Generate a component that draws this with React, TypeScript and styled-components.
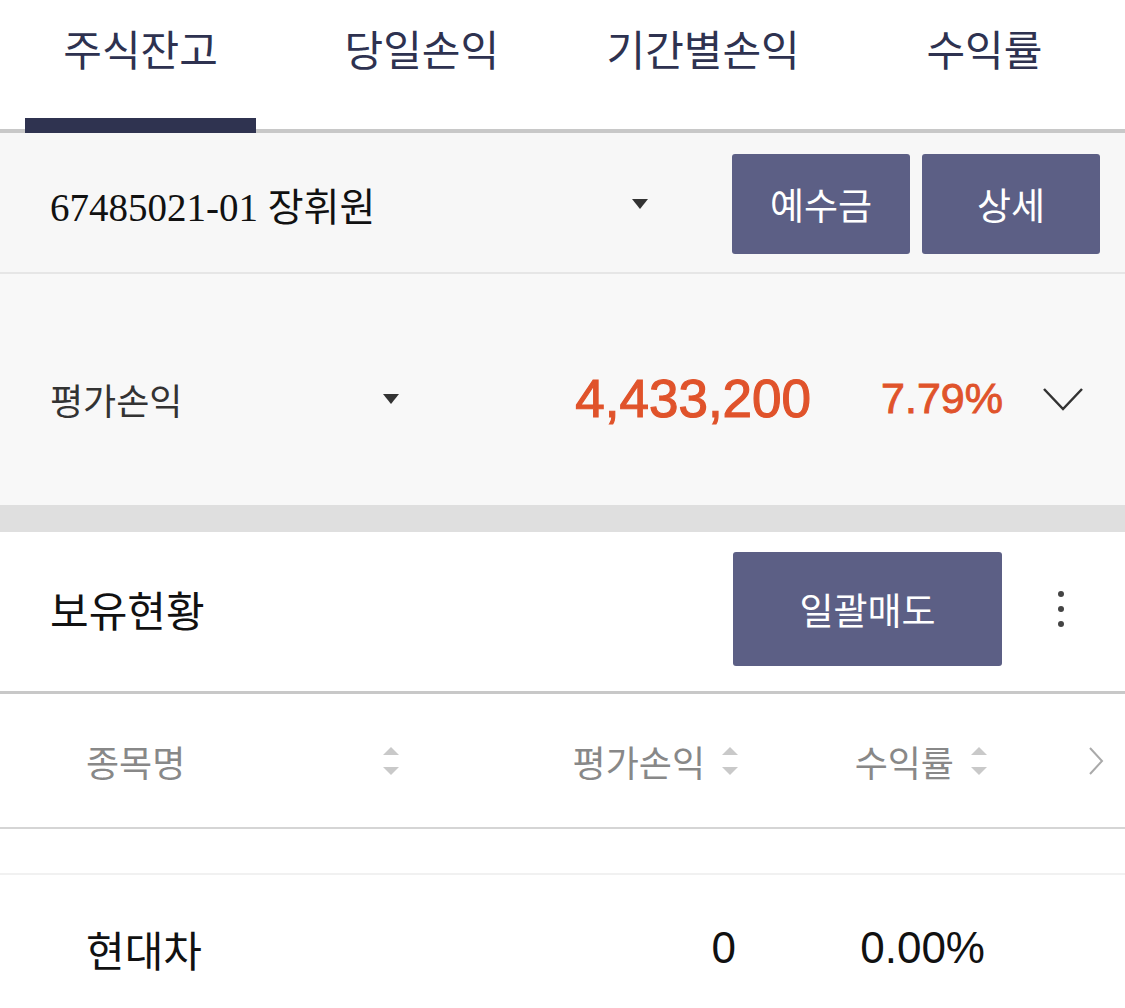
import React from 'react';
import styled, { createGlobalStyle, css } from 'styled-components';

const GlobalStyle = createGlobalStyle`
  html, body { margin: 0; padding: 0; background: #ffffff; }
  body {
    font-family: "Liberation Sans", "Noto Sans CJK KR", sans-serif;
    -webkit-font-smoothing: antialiased;
  }
  * { box-sizing: border-box; }
`;

const Page = styled.div`
  width: 1125px;
  overflow: hidden;
  background: #ffffff;
`;

/* ---------- Tabs ---------- */
const TabBar = styled.nav`
  display: flex;
  height: 133px;
  background: #ffffff;
  box-shadow: inset 0 -4px 0 #c8c8c8;
`;

const Tab = styled.div`
  flex: 1;
  display: flex;
  flex-direction: column;
  padding: 0 25px;
`;

const TabLabel = styled.div`
  height: 94px;
  display: flex;
  align-items: center;
  justify-content: center;
  font-family: "Noto Sans CJK KR", sans-serif;
  font-size: 42px;
  color: #2e3250;
  white-space: nowrap;
`;

const TabIndicator = styled.div<{ $active?: boolean }>`
  margin-top: auto;
  height: 15px;
  background: ${(p) => (p.$active ? '#2f3350' : 'transparent')};
`;

/* ---------- Account bar ---------- */
const AccountBar = styled.div`
  display: flex;
  align-items: center;
  height: 141px;
  padding: 3px 25px 0 50px;
  background: #f7f7f7;
  border-bottom: 2px solid #e6e6e6;
`;

const AccountSelect = styled.div`
  flex: 1;
  display: flex;
  align-items: center;
  justify-content: space-between;
  margin-right: 83px;
`;

const AccountText = styled.span`
  font-family: "Liberation Serif", "Noto Sans CJK KR", serif;
  font-size: 39px;
  color: #111111;
  white-space: nowrap;
`;

const ButtonGroup = styled.div`
  display: flex;
  gap: 12px;
`;

const ActionButton = styled.button<{ $w: number; $h: number }>`
  width: ${(p) => p.$w}px;
  height: ${(p) => p.$h}px;
  border: none;
  border-radius: 3px;
  background: #5c5f85;
  color: #ffffff;
  font-family: "Noto Sans CJK KR", sans-serif;
  font-size: 37px;
  padding: 0;
  display: flex;
  align-items: center;
  justify-content: center;
`;

/* ---------- Profit panel ---------- */
const ProfitPanel = styled.div`
  display: flex;
  align-items: center;
  height: 231px;
  padding: 18px 41px 0 50px;
  background: #f8f8f8;
`;

const LabelGroup = styled.div`
  flex: 0 0 350px;
  display: flex;
  align-items: center;
  justify-content: space-between;
`;

const ProfitLabel = styled.span`
  font-family: "Noto Sans CJK KR", sans-serif;
  font-size: 36px;
  color: #333333;
`;

const Amount = styled.span`
  margin-left: auto;
  font-family: "Liberation Sans", sans-serif;
  font-size: 53px;
  color: #e0532b;
  -webkit-text-stroke: 1.2px #e0532b;
`;

const Rate = styled.span`
  margin-left: 70px;
  font-family: "Liberation Sans", sans-serif;
  font-size: 43px;
  color: #e0532b;
  -webkit-text-stroke: 0.9px #e0532b;
`;

const ChevronDown = styled.svg`
  margin-left: 39px;
  flex: none;
`;

const GapBand = styled.div`
  height: 27px;
  background: #dfdfdf;
`;

/* ---------- Holdings header ---------- */
const HoldingsHeader = styled.div`
  display: flex;
  align-items: center;
  height: 162px;
  padding: 0 34px 6px 50px;
  background: #ffffff;
  border-bottom: 3px solid #c8c8c8;
`;

const HoldingsTitle = styled.h2`
  margin: 0;
  font-family: "Noto Sans CJK KR", sans-serif;
  font-weight: 400;
  font-size: 42px;
  color: #111111;
`;

const HeaderActions = styled.div`
  margin-left: auto;
  display: flex;
  align-items: center;
`;

const Kebab = styled.div`
  width: 60px;
  margin-left: 29px;
  display: flex;
  flex-direction: column;
  align-items: center;
  gap: 9px;
`;

const Dot = styled.span`
  width: 6px;
  height: 6px;
  border-radius: 50%;
  background: #444444;
`;

/* ---------- Table ---------- */
const gridCols = css`
  display: grid;
  grid-template-columns: 314px 339px 249px 1fr;
  align-items: center;
  padding-left: 86px;
`;

const TableHead = styled.div`
  ${gridCols};
  height: 135px;
  border-bottom: 2px solid #d5d5d5;
`;

const HeadCell = styled.div<{ $between?: boolean }>`
  display: flex;
  align-items: center;
  justify-content: ${(p) => (p.$between ? 'space-between' : 'flex-end')};
  gap: 16px;
`;

const HeadText = styled.span`
  font-family: "Noto Sans CJK KR", sans-serif;
  font-size: 36px;
  color: #888888;
  white-space: nowrap;
`;

const MoreCell = styled.div`
  display: flex;
  justify-content: flex-end;
  padding-right: 20px;
`;

const EmptyStrip = styled.div`
  height: 46px;
  border-bottom: 2px solid #f1f1f1;
`;

const DataRow = styled.div`
  ${gridCols};
  height: 146px;
`;

const NameCell = styled.span`
  font-family: "Noto Sans CJK KR", sans-serif;
  font-size: 42px;
  color: #111111;
`;

const NumCell = styled.span`
  justify-self: end;
  margin-right: 3px;
  font-family: "Liberation Sans", sans-serif;
  font-size: 44px;
  color: #111111;
`;

/* ---------- Icons ---------- */
const Caret = () => (
  <svg width="18" height="12" viewBox="0 0 18 12">
    <polygon points="1,1 17,1 9,11" fill="#333333" />
  </svg>
);

const SortIcon = () => (
  <svg width="18" height="30" viewBox="0 0 18 30">
    <polygon points="9,1 17,9 1,9" fill="#c9c9c9" />
    <polygon points="1,21 17,21 9,29" fill="#c9c9c9" />
  </svg>
);

const tabs = ['주식잔고', '당일손익', '기간별손익', '수익률'];

export default function App() {
  return (
    <Page>
      <GlobalStyle />
      <TabBar>
        {tabs.map((t, i) => (
          <Tab key={t}>
            <TabLabel>{t}</TabLabel>
            <TabIndicator $active={i === 0} />
          </Tab>
        ))}
      </TabBar>

      <AccountBar>
        <AccountSelect>
          <AccountText>67485021-01 장휘원</AccountText>
          <Caret />
        </AccountSelect>
        <ButtonGroup>
          <ActionButton $w={178} $h={100}>예수금</ActionButton>
          <ActionButton $w={178} $h={100}>상세</ActionButton>
        </ButtonGroup>
      </AccountBar>

      <ProfitPanel>
        <LabelGroup>
          <ProfitLabel>평가손익</ProfitLabel>
          <Caret />
        </LabelGroup>
        <Amount>4,433,200</Amount>
        <Rate>7.79%</Rate>
        <ChevronDown width="42" height="26" viewBox="0 0 42 26">
          <polyline points="2,3 21,23 40,3" fill="none" stroke="#333333" strokeWidth="2.5" />
        </ChevronDown>
      </ProfitPanel>

      <GapBand />

      <HoldingsHeader>
        <HoldingsTitle>보유현황</HoldingsTitle>
        <HeaderActions>
          <ActionButton $w={269} $h={114}>일괄매도</ActionButton>
          <Kebab>
            <Dot />
            <Dot />
            <Dot />
          </Kebab>
        </HeaderActions>
      </HoldingsHeader>

      <TableHead>
        <HeadCell $between>
          <HeadText>종목명</HeadText>
          <SortIcon />
        </HeadCell>
        <HeadCell>
          <HeadText>평가손익</HeadText>
          <SortIcon />
        </HeadCell>
        <HeadCell>
          <HeadText>수익률</HeadText>
          <SortIcon />
        </HeadCell>
        <MoreCell>
          <svg width="18" height="30" viewBox="0 0 18 30">
            <polyline points="3,2 15,15 3,28" fill="none" stroke="#aaaaaa" strokeWidth="2" />
          </svg>
        </MoreCell>
      </TableHead>

      <EmptyStrip />

      <DataRow>
        <NameCell>현대차</NameCell>
        <NumCell>0</NumCell>
        <NumCell>0.00%</NumCell>
      </DataRow>
    </Page>
  );
}
